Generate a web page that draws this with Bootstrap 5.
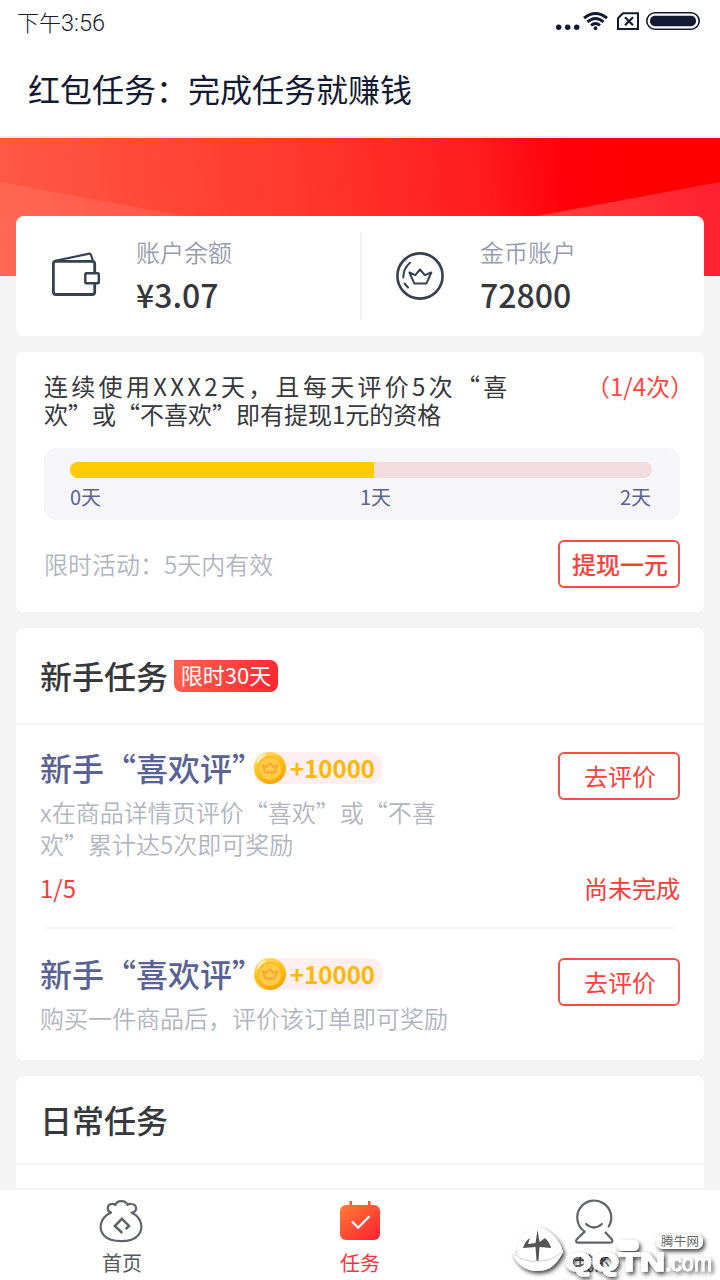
<!DOCTYPE html>
<html lang="zh-CN">
<head>
<meta charset="utf-8">
<meta name="viewport" content="width=device-width, initial-scale=1">
<title>红包任务</title>
<link href="https://cdn.jsdelivr.net/npm/bootstrap@5.3.0/dist/css/bootstrap.min.css" rel="stylesheet">
<style>
  body { font-family: "Noto Sans CJK SC", sans-serif; background: #f4f4f4; color: #37383c; font-size: 24px; }
  svg { display: block; flex: none; }
  .screen { width: 720px; height: 1280px; }
  .status { height: 44px; padding: 0 20px 0 17px; color: #141a31; }
  .clock { font-family: Roboto, "Noto Sans CJK SC", sans-serif; font-size: 23.5px; font-weight: 300; line-height: 43px; }
  .clock span { font-family: "Noto Sans CJK SC", sans-serif; font-size: 22px; }
  .topbar { height: 94px; border-bottom: 2px solid #eceef0; padding-left: 28px; }
  .topbar h1 { font-size: 32px; font-weight: 400; line-height: 88px; color: #141a31; }
  .banner { height: 138px; }
  .main-area { padding: 0 16px; margin-top: -60px; gap: 16px; }
  .panel { border: 0; border-radius: 8px; color: inherit; flex: none; }
  .accounts { height: 120px; }
  .account { padding: 16px 0 0 36px; }
  .account + .account::before { content: ""; position: absolute; left: 0; top: 16px; width: 2px; height: 88px; background: #f2f2f3; }
  .account svg { margin-top: 20px; }
  .account-text { margin-left: 36px; }
  .cap { color: #969bb0; font-weight: 350; line-height: 40px; }
  .amount { font-size: 32px; font-weight: 500; line-height: 45px; }
  .promo { height: 260px; padding: 20px 24px 0 28px; }
  .promo p { line-height: 28px; }
  .spread { letter-spacing: 3.3px; }
  .times { color: #ff4842; line-height: 28px; margin-right: -14px; }
  .meter { height: 72px; margin-top: 20px; padding: 14px 28px 0 26px; background: #f6f5f8; border-radius: 12px; }
  .meter .progress { height: 16px; border-radius: 8px; background: #f3dcde; }
  .meter .progress-bar { background: #ffcc00; }
  .scale { display: grid; grid-template-columns: 290px 1fr auto; font-size: 20px; line-height: 32px; color: #5a6293; padding: 3px 1px 0 0; }
  .soft { color: #b2b5c0; font-weight: 350; }
  .act { width: 122px; height: 48px; padding: 0 0 0 2px; border: 2px solid #ff4c45; border-radius: 6px; color: #ff403d; font-size: 24px; line-height: 43px; padding-bottom: 1px; font-weight: 500; flex: none; }
  .act.thin { font-weight: 400; }
  .head { border-bottom: 2px solid #f5f5f6; padding-left: 24px; }
  .head h2 { font-size: 32px; font-weight: 500; line-height: 44px; position: relative; top: -1px; }
  .limit { width: 104px; height: 32px; margin-left: 6px; border-radius: 0 8px 8px 8px; background: linear-gradient(110deg, #ff6450, #ff2530); color: #fff; font-size: 22px; line-height: 29px; text-align: center; }
  .task { padding: 0 24px; }
  .task h3 { font-size: 32px; font-weight: 500; line-height: 42px; padding-bottom: 2px; color: #5a6293; }
  .reward { width: 128px; height: 32px; margin-left: -10px; border-radius: 12px; background: #fdeeef; color: #ffb800; font-weight: 700; font-size: 24px; line-height: 32px; gap: 4px; }
  .desc { line-height: 32px; }
  .state { color: #ff3a3c; line-height: 36px; }
  .sep { height: 2px; background: #f5f5f6; margin: 0 28px; }
  .tabbar { height: 92px; border-top: 2px solid #f2f2f2; display: grid; grid-template-columns: 244px 232px 236px; font-size: 20px; line-height: 28px; color: #55585d; }
  .tabbar a { color: inherit; padding-top: 8px; }
  .tabbar svg { margin-bottom: 3px; }
  .tabbar .active { color: #ff3338; }
  .tabbar .stamp { right: 0; bottom: 0; margin: 0; pointer-events: none; }
</style>
</head>
<body>
<svg width="0" height="0" class="position-absolute">
  <defs>
    <linearGradient id="gold" x1="0" y1="0" x2=".5" y2="1"><stop offset="0" stop-color="#ffe58a"/><stop offset=".5" stop-color="#ffc51c"/><stop offset="1" stop-color="#ffa400"/></linearGradient>
    <symbol id="coin" viewBox="0 0 32 32">
      <circle cx="16" cy="16" r="16" fill="url(#gold)"/>
      <circle cx="16" cy="16" r="12.2" fill="#ffb914"/><circle cx="16" cy="16.6" r="11" fill="#ffcb45"/>
      <path d="M8.800 13l3.800 2 3.400-4 3.400 4 3.900-2-2.500 7.500h-9.600z" fill="none" stroke="#ffa23a" stroke-width="1.800" stroke-linejoin="round"/>
      <path d="M4 10Q6 5 10.500 3.500" fill="none" stroke="#fff" stroke-width="2" stroke-linecap="round" opacity=".75"/>
    </symbol>
  </defs>
</svg>
<div class="screen position-relative overflow-hidden d-flex flex-column mx-auto">
  <div class="status bg-white d-flex justify-content-between flex-shrink-0">
    <div class="clock"><span>下午</span>3:56</div>
    <svg width="145" height="44" viewBox="555 0 145 44" fill="none" stroke="#141a31">
      <g fill="#141a31" stroke="none"><circle cx="558.700" cy="27.300" r="2.700"/><circle cx="567.700" cy="27.300" r="2.700"/><circle cx="576.700" cy="27.300" r="2.700"/><circle cx="595.500" cy="28.200" r="1.900"/></g>
      <g stroke-width="2.900"><path d="M584 18.200Q595.500 8.800 607 18.200"/><path d="M587.500 21.800Q595.500 15 603.500 21.800"/><path d="M591 25.300Q595.500 21.500 600 25.300"/></g>
      <path d="M623 13.300H638V29H618V18.200z" stroke-width="2"/>
      <path d="M625 17.300l8 8m0-8l-8 8" stroke-width="2.200"/>
      <rect x="646.800" y="12.800" width="52.400" height="16.400" rx="8.200" stroke-width="1.600"/>
      <rect x="650" y="15.700" width="46" height="10.600" rx="5" fill="#141a31" stroke="none"/>
    </svg>
  </div>
  <header class="topbar bg-white flex-shrink-0"><h1 class="m-0">红包任务：完成任务就赚钱</h1></header>

  <svg class="banner" width="720" height="138" viewBox="0 0 720 138">
    <defs><linearGradient id="red" gradientUnits="userSpaceOnUse" x1="0" y1="70" x2="640" y2="0"><stop offset="0" stop-color="#ff5945"/><stop offset=".45" stop-color="#ff3a2c"/><stop offset=".75" stop-color="#ff1c1f"/><stop offset=".88" stop-color="#ff0008"/><stop offset="1" stop-color="#ff0000"/></linearGradient>
    <linearGradient id="wingR" x1="0" x2="1"><stop offset="0" stop-color="#ff4040"/><stop offset="1" stop-color="#ff2030"/></linearGradient></defs>
    <path fill="url(#red)" d="M0 0H720V138H0z"/>
    <path fill="#fff" fill-opacity=".09" d="M0 44L184 78V138H0z"/>
    <path fill="url(#wingR)" d="M720 44L537 78V138H720z"/>
  </svg>

  <main class="main-area d-flex flex-column flex-grow-1 position-relative">
    <section class="card panel accounts">
      <div class="row g-0 h-100">
        <div class="col-6 account d-flex">
          <svg width="48" height="48" viewBox="52 252 48 48" fill="none" stroke="#364150" stroke-width="2.800" stroke-linejoin="round">
            <path d="M54 261L89.500 253.700Q90.500 253.600 90.800 254.500L93 261" stroke-width="2.200"/>
            <path d="M94.700 273V264Q94.700 261.400 92.300 261.400H55.500Q53.400 261.400 53.400 263.800V292Q53.400 294.500 55.800 294.500H92.300Q94.700 294.500 94.700 292V283.500"/>
            <rect x="85.300" y="273.200" width="13.500" height="10" rx="1" stroke-width="2.400"/>
          </svg>
          <div class="account-text"><div class="cap">账户余额</div><div class="amount">¥3.07</div></div>
        </div>
        <div class="col-6 account d-flex position-relative">
          <svg width="48" height="48" viewBox="396 252 48 48" fill="none" stroke="#364150" stroke-width="2.600" stroke-linejoin="round" stroke-linecap="round">
            <circle cx="420" cy="276" r="22.600"/>
            <path d="M409.400 272.500L415.300 275.200L420 269.500L424.800 275.200L431.300 272.500L426.500 283.400H414.300z" stroke-width="2"/>
            <path d="M410 262.700Q403.500 268 403.300 277.500M404.600 283.500L408 287.500" stroke-width="2"/>
          </svg>
          <div class="account-text"><div class="cap">金币账户</div><div class="amount">72800</div></div>
        </div>
      </div>
    </section>

    <section class="card panel promo">
      <div class="d-flex justify-content-between">
        <p class="m-0 text-nowrap"><span class="spread">连续使用XXX2天，且每天评价5次“喜</span><br>欢”或“不喜欢”即有提现1元的资格</p>
        <div class="times text-nowrap">（1/4次）</div>
      </div>
      <div class="meter">
        <div class="progress"><div class="progress-bar" style="width:52.3%"></div></div>
        <div class="scale"><span>0天</span><span>1天</span><span>2天</span></div>
      </div>
      <div class="d-flex justify-content-between align-items-center" style="margin-top:20px">
        <span class="soft">限时活动：5天内有效</span><button class="btn act">提现一元</button>
      </div>
    </section>

    <section class="card panel" style="height:432px">
      <div class="head d-flex align-items-center" style="height:97px"><h2 class="m-0">新手任务</h2><span class="limit">限时30天</span></div>
      <div class="task" style="height:202px;padding-top:20px">
        <div class="d-flex justify-content-between">
          <div class="d-flex align-items-center" style="height:46px"><h3 class="m-0">新手“喜欢评”</h3><span class="reward d-flex"><svg width="32" height="32"><use href="#coin"/></svg>+10000</span></div>
          <button class="btn act thin" style="margin-top:7px">去评价</button>
        </div>
        <div class="soft desc" style="margin-top:-4px">x在商品详情页评价“喜欢”或“不喜<br>欢”累计达5次即可奖励</div>
        <div class="state d-flex justify-content-between" style="margin-top:10px"><span>1/5</span><span>尚未完成</span></div>
      </div>
      <div class="sep"></div>
      <div class="task" style="padding-top:22px">
        <div class="d-flex justify-content-between">
          <div class="d-flex align-items-center" style="height:46px"><h3 class="m-0">新手“喜欢评”</h3><span class="reward d-flex"><svg width="32" height="32"><use href="#coin"/></svg>+10000</span></div>
          <button class="btn act thin" style="margin-top:7px">去评价</button>
        </div>
        <div class="soft desc" style="margin-top:-4px">购买一件商品后，评价该订单即可奖励</div>
      </div>
    </section>

    <section class="card panel rounded-bottom-0" style="height:112px">
      <div class="head d-flex align-items-center" style="height:89px"><h2 class="m-0">日常任务</h2></div>
    </section>
  </main>

  <nav class="tabbar bg-white flex-shrink-0 position-relative">
    <a class="d-flex flex-column align-items-center text-decoration-none" href="#">
      <svg width="48" height="48" viewBox="98 1198 48 48" fill="none" stroke="#606469" stroke-width="2.200" stroke-linecap="round" stroke-linejoin="round">
        <path d="M111 1212.600C99 1218.500 98.500 1229.500 104 1235.500C111 1243 131.500 1243 138 1235.500C143.500 1229.500 143 1218.500 131.500 1212.600C137.500 1212 138 1204.500 131 1204C129.500 1203.800 128.500 1204.200 127.500 1205C126 1199.800 116.500 1199.800 115.500 1205C112 1202.700 108 1204.500 107.800 1208C107.700 1210 109 1212 111 1212.600z"/>
        <path d="M122.300 1233L114.800 1226L121.900 1218.800L129 1225.900L125.800 1229.200" stroke-width="2.500" stroke-linecap="butt" stroke-linejoin="miter"/>
      </svg>首页</a>
    <a class="active d-flex flex-column align-items-center text-decoration-none" href="#">
      <svg width="48" height="48" viewBox="336 1198 48 48" fill="none">
        <defs><linearGradient id="cal" x1=".1" y1="0" x2="1" y2="1"><stop offset="0" stop-color="#ff7a35"/><stop offset="1" stop-color="#ff1d32"/></linearGradient></defs>
        <path d="M350.700 1201V1207M369.300 1201V1207" stroke="#ff5a35" stroke-width="2.500"/>
        <rect x="340" y="1205" width="40" height="35" rx="6" fill="url(#cal)"/>
        <path d="M352 1221.500L358.200 1227.700L369.400 1216.200" stroke="#fff" stroke-width="2.300"/>
      </svg>任务</a>
    <a class="d-flex flex-column align-items-center text-decoration-none" href="#">
      <svg width="48" height="48" viewBox="570 1198 48 48" fill="none" stroke="#606469" stroke-width="2.200" stroke-linecap="round" stroke-linejoin="round">
        <path d="M608.700 1226.500A17 17 0 1 0 584.700 1231.600L576.600 1239.500Q575 1242.600 578.500 1242.700H609.500Q613.500 1242.600 612 1239.500L605.500 1232.500"/>
        <path d="M586 1224Q594 1231 602 1224"/>
      </svg>我的</a>
    <svg class="stamp position-absolute" width="216" height="60" viewBox="504 1220 216 60">
      <defs><filter id="shade" x="-10%" y="-20%" width="120%" height="150%"><feDropShadow dx="2" dy="2.500" stdDeviation="2" flood-color="#000" flood-opacity=".75"/></filter></defs>
      <g filter="url(#shade)" fill="#fff">
        <path d="M537 1227C550 1229 560 1240 563 1252C557 1264 550 1271 537 1271C525 1271 516 1264 512 1252C514 1252 516 1254 518 1255C515 1243 525 1230 537 1227z"/>
        <rect x="617" y="1240" width="22" height="11" rx="5.500"/>
        <rect x="656" y="1234" width="47" height="15" rx="7"/>
        <g font-family="Liberation Sans, sans-serif">
          <text x="565" y="1271" font-size="26" font-weight="700" textLength="100" lengthAdjust="spacingAndGlyphs" stroke="#fff" stroke-width="1.500">QQTN</text>
          <text x="665" y="1271" font-size="23" textLength="47" lengthAdjust="spacingAndGlyphs" stroke="#fff" stroke-width=".6">.com</text>
        </g>
      </g>
      <path d="M537.500 1230L539.500 1242L545 1238Q550 1243 551 1248L539.500 1247L538.500 1261H536.500L535.500 1247L523 1248Q525 1241 530 1238L528 1244L535.500 1243z" fill="#555"/>
      <path d="M514 1254Q526 1263 537 1261Q550 1262 561 1253" fill="none" stroke="#ccc" stroke-width="1"/>
      <text x="661" y="1246" font-size="12.500" fill="#666" font-family="Noto Sans CJK SC, sans-serif" textLength="38">腾牛网</text>
    </svg>
  </nav>
</div>
<script src="https://cdn.jsdelivr.net/npm/bootstrap@5.3.0/dist/js/bootstrap.bundle.min.js"></script>
</body>
</html>
